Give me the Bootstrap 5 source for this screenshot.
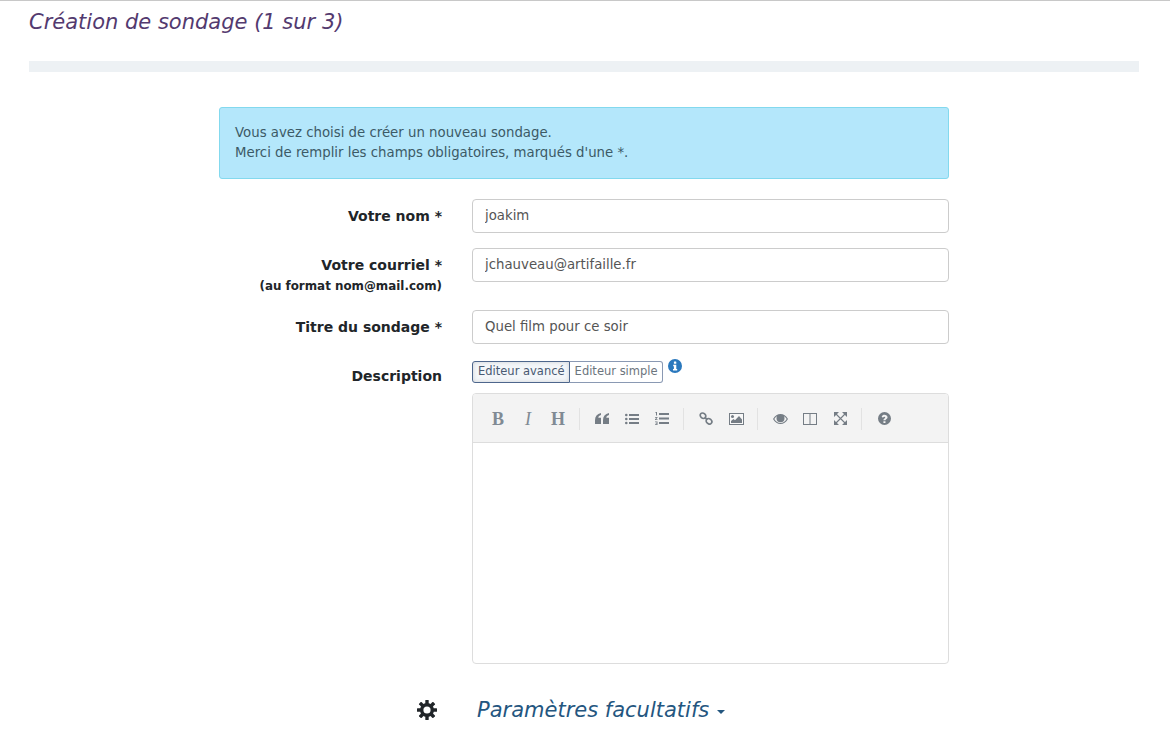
<!DOCTYPE html>
<html lang="fr">
<head>
<meta charset="utf-8">
<title>Création de sondage</title>
<link href="https://cdn.jsdelivr.net/npm/bootstrap@5.3.0/dist/css/bootstrap.min.css" rel="stylesheet">
<style>
html,body{height:731px;overflow:hidden}
body{font-family:"DejaVu Sans",sans-serif;font-size:14px;color:#212529;background:#fff;border-top:1px solid #c8c8c8}
.page-wrap{padding:0 31px 0 29px}
.page-title{font-size:21px;font-style:italic;font-weight:400;color:#533a6f;line-height:24px;margin:9px 0 0}
.title-bar{height:11px;background:#edf1f4;margin-top:27px}
.form-wrap{width:730px;margin:35px auto 0}
.info-box{height:72px;padding:15px 15px 0;background:#b4e7fb;border:1px solid #83d9ee;border-radius:3px;color:#3c5a66;font-size:13.3px;line-height:20px;margin-bottom:20px}
.field-row{display:grid;grid-template-columns:223px 477px;column-gap:30px;margin-left:0}
.gap-a{margin-bottom:15px}
.gap-b{margin-bottom:16px}
.gap-c{margin-bottom:17px}
.field-label{font-weight:700;font-size:14px;text-align:right;color:#212529;line-height:20px;padding-top:7px;margin:0}
.field-label.desc-label{padding-top:5px}
.field-label small{display:block;font-size:11.9px;line-height:16px;margin-top:3px;font-weight:700}
.field-input.form-control{height:34px;font-size:13.3px;padding:0 12px 2px;color:#555;border:1px solid #ccc;border-radius:4px;line-height:30px}
.editor-tabs{height:22px;gap:0;align-items:flex-start}
.tab-btn{height:22px;font-size:11.5px;line-height:17px;padding:0 4px 2px 5px;background:#fff;border:1px solid #8a99b3;color:#6c757d;border-left:0;border-radius:0 3px 3px 0}
.tab-btn.tab-on{background:#f3f6f9;color:#495a72;border:1px solid #4d668c;border-radius:3px 0 0 3px;box-shadow:inset 0 0 4px rgba(0,0,0,.15)}
.tab-info{margin:-2px 0 0 5px;display:block}
.md-editor{height:271px;margin-top:10px;border:1px solid #ddd;border-radius:4px;overflow:hidden}
.md-toolbar{height:49px;background:#f3f3f3;border-bottom:1px solid #ddd;padding-left:10px;padding-top:1px;color:#6c757d}
.tb-icon{width:30px;height:30px;display:flex;align-items:center;justify-content:center;fill:#757d85;color:#757d85}
.tb-letter{font-family:"Liberation Serif",serif;font-size:18px;line-height:1;color:#808a94}
.tb-sep{width:1px;height:22px;background:#e2e2e2;margin:0 7px 0 6px}
.opt-row{height:34px;margin-top:29px;align-items:center}
.opt-gear{margin-left:198px;width:20px;height:20px;display:block}
.opt-link{margin-left:40px;font-size:21px;font-style:italic;color:#24567f;text-decoration:none;line-height:34px;white-space:nowrap}
.opt-caret{display:inline-block;border-top:4px solid #24567f;border-left:4px solid transparent;border-right:4px solid transparent;vertical-align:middle;margin-left:1px;margin-top:2px}
</style>
</head>
<body>
<div class="page-wrap">
  <h1 class="page-title">Création de sondage (1 sur 3)</h1>
  <div class="title-bar"></div>
  <div class="form-wrap">
    <div class="info-box">Vous avez choisi de créer un nouveau sondage.<br>Merci de remplir les champs obligatoires, marqués d'une *.</div>
    <form>
      <div class="field-row gap-a">
        <label class="field-label" for="f1">Votre nom *</label>
        <input id="f1" class="form-control field-input" value="joakim">
      </div>
      <div class="field-row gap-b">
        <label class="field-label" for="f2">Votre courriel *<small>(au format nom@mail.com)</small></label>
        <input id="f2" class="form-control field-input" value="jchauveau@artifaille.fr">
      </div>
      <div class="field-row gap-c">
        <label class="field-label" for="f3">Titre du sondage *</label>
        <input id="f3" class="form-control field-input" value="Quel film pour ce soir">
      </div>
      <div class="field-row">
        <label class="field-label desc-label">Description</label>
        <div>
          <div class="d-flex editor-tabs">
            <button type="button" class="tab-btn tab-on">Editeur avancé</button><button type="button" class="tab-btn">Editeur simple</button>
            <svg class="tab-info" width="14" height="14" viewBox="0 0 14 14"><circle cx="7" cy="7" r="7" fill="#2a78bd"/><rect x="5.9" y="2.4" width="2.4" height="2.3" rx=".5" fill="#fff"/><path d="M5.2 5.8h3.1v4.3h.9v1.4H5v-1.4h.9V7.2h-.7z" fill="#fff"/></svg>
          </div>
          <div class="md-editor">
            <div class="md-toolbar d-flex align-items-center">
              <span class="tb-icon tb-letter fw-bold">B</span>
              <span class="tb-icon tb-letter fst-italic">I</span>
              <span class="tb-icon tb-letter fw-bold">H</span>
              <span class="tb-sep"></span>
              <span class="tb-icon"><svg width="14" height="12" viewBox="0 0 14 12"><path d="M0 7.200C0 3.200 2 .8 6 0v2C4.400 2.400 3.400 3.400 3.300 4.800H6V11H0zM8 7.200C8 3.200 10 .8 14 0v2c-1.600.4-2.600 1.400-2.700 2.800H14V11H8z"/></svg></span>
              <span class="tb-icon"><svg width="14" height="12" viewBox="0 0 14 12"><circle cx="1.300" cy="2" r="1.300"/><circle cx="1.300" cy="6" r="1.300"/><circle cx="1.300" cy="10" r="1.300"/><path d="M4 1h10v2H4zM4 5h10v2H4zM4 9h10v2H4z"/></svg></span>
              <span class="tb-icon"><svg width="14" height="13" viewBox="0 0 14 13"><path d="M.5 0h1.500v3.500H1V1H.5zM0 5h2.500v.8L1 7.200h1.500V8H0v-.7l1.500-1.500H0zM0 9.500h2.500v3.500H0v-.7h1.600v-.7H.6v-.6h1v-.7H0z"/><path d="M4 1h10v2H4zM4 5.500h10v2H4zM4 10h10v2H4z"/></svg></span>
              <span class="tb-sep"></span>
              <span class="tb-icon"><svg width="14" height="13" viewBox="0 0 14 13" fill="none" stroke="#757d85" stroke-width="1.700"><ellipse cx="4" cy="3.700" rx="3" ry="2.500" transform="rotate(40 4 3.700)"/><ellipse cx="10" cy="9.300" rx="3" ry="2.500" transform="rotate(40 10 9.300)"/><path d="M6 5.500l2 2"/></svg></span>
              <span class="tb-icon"><svg width="15" height="12" viewBox="0 0 15 12"><rect width="15" height="12" fill="#f8f8f8"/><path fill-rule="evenodd" d="M0 0h15v12H0zM1 1v10h13V1z"/><circle cx="3.500" cy="3.500" r="1.500"/><path d="M2 10V8l2.500-2 1.500 1.200L10 3l3 3.500V10z"/></svg></span>
              <span class="tb-sep"></span>
              <span class="tb-icon"><svg width="15" height="10" viewBox="0 0 15 10"><path fill-rule="evenodd" d="M0 5C2 1.700 4.500 0 7.500 0S13 1.700 15 5c-2 3.300-4.500 5-7.500 5S2 8.300 0 5zm1.300 0c1.600 2.500 3.700 3.900 6.200 3.900s4.600-1.400 6.200-3.900c-.8-1.300-1.800-2.300-2.900-3 .5.700.7 1.400.7 2.200a4 4 0 0 1-8 0c0-.8.200-1.500.7-2.200-1.100.7-2.100 1.700-2.900 3z"/></svg></span>
              <span class="tb-icon"><svg width="14" height="12" viewBox="0 0 14 12"><path fill-rule="evenodd" d="M0 0h14v12H0zM1 1v10h5.500V1zM7.500 1v10H13V1z"/></svg></span>
              <span class="tb-icon"><svg width="13" height="13" viewBox="0 0 13 13"><path d="M0 0h5L0 5zM13 0v5L8 0zM0 13V8l5 5zM13 13H8l5-5z"/><path d="M2 2l9 9M11 2l-9 9" stroke="#757d85" stroke-width="1.100"/></svg></span>
              <span class="tb-sep"></span>
              <span class="tb-icon"><svg width="13" height="13" viewBox="0 0 12 12"><path fill-rule="evenodd" d="M6 0a6 6 0 1 1 0 12A6 6 0 0 1 6 0zM5 8.500v1.700h1.900V8.500zM3.400 4.300l1.200.9c.3-.5.700-.8 1.200-.8.500 0 .9.200.9.600 0 .4-.3.600-.8.900-.6.300-.9.800-.9 1.600h1.900c0-.4.200-.6.700-.9.700-.4 1.200-1 1.200-1.800C8.800 3.400 7.400 2.500 6 2.500c-1.200 0-2 .6-2.600 1.800z"/></svg></span>
            </div>
          </div>
        </div>
      </div>
      <div class="d-flex opt-row">
        <svg class="opt-gear" viewBox="0 0 20 20"><g fill="#212529"><rect x="8.300" y="0" width="3.400" height="20" rx=".5"/><rect x="0" y="8.300" width="20" height="3.400" rx=".5"/><rect x="8.300" y="0" width="3.400" height="20" rx=".5" transform="rotate(45 10 10)"/><rect x="8.300" y="0" width="3.400" height="20" rx=".5" transform="rotate(-45 10 10)"/></g><circle cx="10" cy="10" r="5.300" fill="none" stroke="#212529" stroke-width="3.400"/><circle cx="10" cy="10" r="3.600" fill="#fff"/></svg>
        <a class="opt-link" href="#">Paramètres facultatifs <span class="opt-caret"></span></a>
      </div>
    </form>
  </div>
</div>
</body>
</html>
